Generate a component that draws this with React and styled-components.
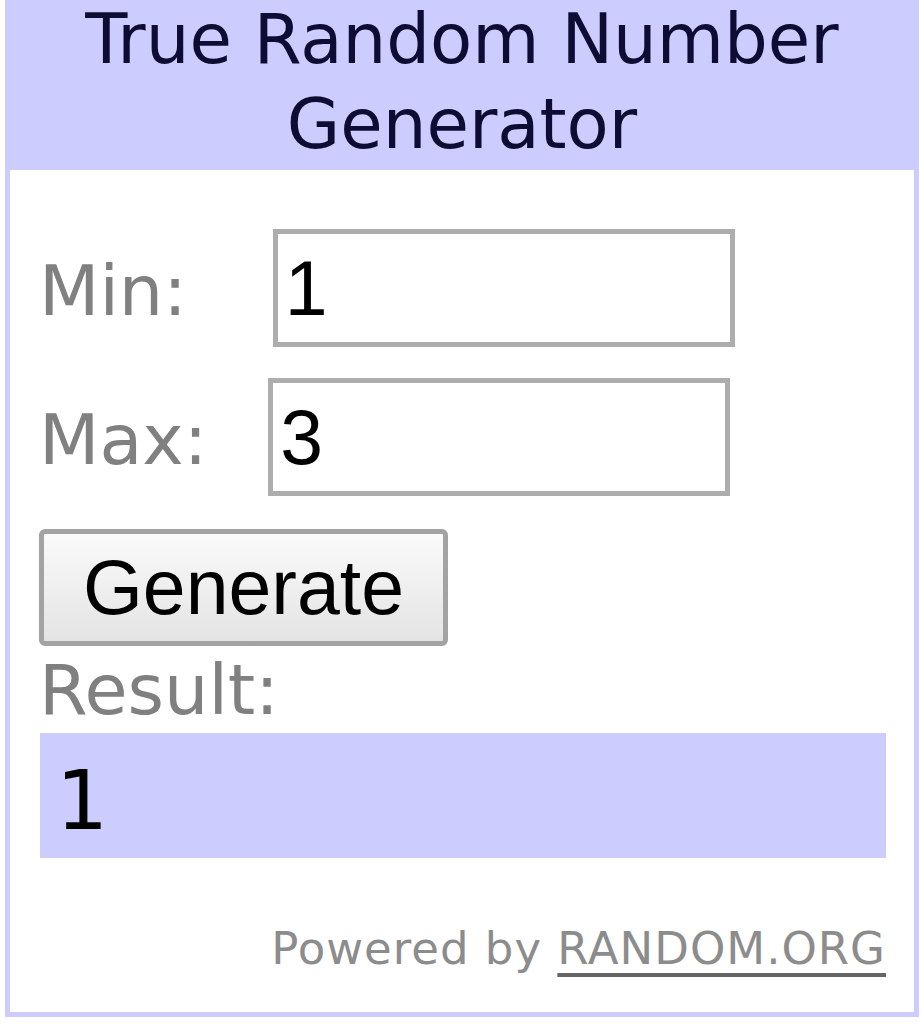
import React from 'react';
import styled, { createGlobalStyle } from 'styled-components';

const GlobalStyle = createGlobalStyle`
  html, body {
    margin: 0;
    padding: 0;
    background: #fff;
  }
`;

const App = () => {
  return (
    <>
      <GlobalStyle />
      <Widget>
        <Header>
          <Title>True Random Number Generator</Title>
        </Header>
        <Body>
          <Row $top={59} $gap={86}>
            <Label>Min:</Label>
            <NumberInput defaultValue="1" />
          </Row>
          <Row $top={31} $gap={61}>
            <Label>Max:</Label>
            <NumberInput defaultValue="3" />
          </Row>
          <Button type="button">Generate</Button>
          <ResultLabel>Result:</ResultLabel>
          <ResultBox>1</ResultBox>
          <Footer>
            Powered by <Link href="#">RANDOM.ORG</Link>
          </Footer>
        </Body>
      </Widget>
    </>
  );
};

const Widget = styled.div`
  box-sizing: border-box;
  width: 914px;
  height: 1017px;
  margin-left: 5px;
  border: 5px solid #ccccff;
  border-top: 0;
  background: #fff;
  font-family: "DejaVu Sans", Verdana, sans-serif;
`;

const Header = styled.div`
  height: 170px;
  margin: 0 -5px;
  background: #ccccff;
  text-align: center;
  overflow: hidden;
`;

const Title = styled.h1`
  margin: -3px auto 0;
  width: 800px;
  font-size: 69px;
  font-weight: 400;
  line-height: 85px;
  color: #0d0d33;
`;

const Body = styled.div`
  display: flex;
  flex-direction: column;
  align-items: flex-start;
  padding: 0 28px 0 29px;
`;

const Row = styled.div`
  display: flex;
  align-items: baseline;
  gap: ${(p) => p.$gap}px;
  margin-top: ${(p) => p.$top}px;
`;

const Label = styled.span`
  font-size: 70px;
  color: #808080;
`;

const NumberInput = styled.input`
  box-sizing: border-box;
  width: 462px;
  height: 118px;
  padding: 0 4px 0 7px;
  border: 5px solid #adadad;
  font-family: "Liberation Sans", Arial, sans-serif;
  font-size: 77px;
  color: #000;
  background: #fff;
  outline: none;
`;

const Button = styled.button`
  box-sizing: border-box;
  width: 409px;
  height: 117px;
  margin-top: 33px;
  border: 5px solid #a3a3a3;
  border-radius: 6px;
  background: linear-gradient(#fafafa, #e4e4e4);
  font-family: "Liberation Sans", Arial, sans-serif;
  font-size: 77px;
  color: #000;
  padding: 0;
  cursor: pointer;
`;

const ResultLabel = styled.div`
  margin-top: 4px;
  font-size: 70px;
  line-height: 80px;
  color: #808080;
`;

const ResultBox = styled.div`
  box-sizing: border-box;
  align-self: stretch;
  height: 125px;
  margin: 3px 0 0 1px;
  padding: 10px 0 0 16px;
  background: #ccccff;
  font-size: 82px;
  line-height: 115px;
  color: #000;
`;

const Footer = styled.div`
  align-self: stretch;
  margin-top: 64px;
  text-align: right;
  font-size: 45px;
  letter-spacing: 1px;
  line-height: 54px;
  color: #8c8c8c;
`;

const Link = styled.a`
  color: #8c8c8c;
  text-decoration: underline;
  text-decoration-color: #666;
  text-decoration-thickness: 4px;
  text-underline-offset: 9px;
`;

export default App;
